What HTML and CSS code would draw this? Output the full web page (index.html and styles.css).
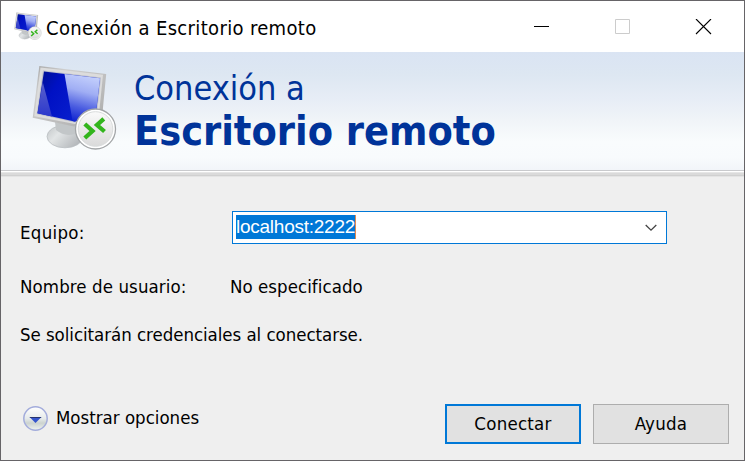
FILE: index.html
```html
<!DOCTYPE html>
<html lang="es">
<head>
<meta charset="utf-8">
<title>Conexión a Escritorio remoto</title>
<link rel="stylesheet" href="styles.css">
</head>
<body>
<svg width="0" height="0" class="defs" aria-hidden="true">
  <defs>
    <linearGradient id="screen" x1="0" y1="0" x2="1" y2="0.500">
      <stop offset="0" stop-color="#00108c"/><stop offset=".35" stop-color="#0011c4"/><stop offset="1" stop-color="#0a22d0"/>
    </linearGradient>
    <linearGradient id="shine" x1=".5" y1="0" x2=".3" y2="1">
      <stop offset="0" stop-color="#c3cffc"/><stop offset=".35" stop-color="#a0aef4"/><stop offset=".7" stop-color="#4a5ce0"/><stop offset="1" stop-color="#1024d0"/>
    </linearGradient>
    <linearGradient id="glow" x1="0" y1="0" x2="0" y2="1">
      <stop offset="0" stop-color="#5a62cc"/><stop offset="1" stop-color="#2c38cc"/>
    </linearGradient>
    <linearGradient id="frame" x1="0" y1="0" x2="1" y2="1">
      <stop offset="0" stop-color="#a4a4a4"/><stop offset=".25" stop-color="#cfcfcf"/><stop offset=".8" stop-color="#b4b4b4"/><stop offset="1" stop-color="#9c9c9c"/>
    </linearGradient>
    <linearGradient id="base" x1="0" y1="0" x2="1" y2=".6">
      <stop offset="0" stop-color="#c0c4c6"/><stop offset=".4" stop-color="#e2e5e6"/><stop offset="1" stop-color="#b4b8bb"/>
    </linearGradient>
    <linearGradient id="disc" x1="0" y1="0" x2="0" y2="1">
      <stop offset="0" stop-color="#fafafa"/><stop offset="1" stop-color="#dadada"/>
    </linearGradient>
    <linearGradient id="orb" x1="0" y1="0" x2="0" y2="1">
      <stop offset="0" stop-color="#ffffff"/><stop offset=".5" stop-color="#e6eaea"/><stop offset=".7" stop-color="#ccd3d0"/><stop offset="1" stop-color="#f0f4f0"/>
    </linearGradient>
    <symbol id="rdp" viewBox="0 0 86 88">
      <ellipse cx="33" cy="71.500" rx="18" ry="11.300" fill="url(#base)" stroke="#b9bec2" stroke-width=".8"/>
      <path d="M23 57L44 61L45 68Q34 73 24 65Z" fill="#c2c6c8"/>
      <path d="M7.300 1L74.200 9L69.700 56L42 61.500L.7 52.700Z" fill="url(#frame)"/>
      <path d="M8.500 2.500L71 9.700L66.500 54L43 59L2.300 51.300Z" fill="#dcdcdc"/>
      <path d="M11 5.500L69 12.500L64.500 52L43 57.500L4.700 49Z" fill="#b9bccc"/>
      <path d="M12 6.500L68 13.300L63.500 52L42.500 56.500L5.500 48.300Z" fill="url(#screen)"/>
      <path d="M32.500 9L68 13.300L63.500 52L42.500 56.500L40.500 56Z" fill="url(#shine)"/>
      <path d="M10.700 17L20 51.500L5.500 48.300Z" fill="url(#glow)"/>
      <circle cx="63.500" cy="64" r="20" fill="#fff" stroke="#a2a5a7" stroke-width="1.300"/>
      <circle cx="63.500" cy="64" r="17.300" fill="url(#disc)" stroke="#d9dcdc"/>
      <path d="M52.800 59L60.500 66L52.800 73M71.800 53.800L65 60L72.500 66.500" fill="none" stroke="#32b51c" stroke-width="4.300"/>
    </symbol>
  </defs>
</svg>
<main class="window">
  <header class="titlebar">
    <svg class="app-icon"><use href="#rdp"/></svg>
    <h1 class="caption">Conexión a Escritorio remoto</h1>
    <svg class="controls" width="180" height="16" fill="none">
      <path d="M0 7.500H15" stroke="#000"/>
      <path d="M81.500 .5H95.500V14.500H81.500Z" stroke="#ccc"/>
      <path d="M162 0L177 15M177 0L162 15" stroke="#000" stroke-width="1.100"/>
    </svg>
  </header>
  <section class="banner">
    <svg class="banner-icon"><use href="#rdp"/></svg>
    <div class="heading">
      <div class="heading-light">Conexión a</div>
      <div class="heading-bold">Escritorio remoto</div>
    </div>
  </section>
  <div class="separator"></div>
  <section class="form">
    <div class="row row-host">
      <span class="label t-equipo">Equipo:</span>
      <div class="combo"><span class="selected">localhost:2222</span>
        <svg class="chevron" width="12" height="8" fill="none"><path d="M.7 1L6 6.200L11.300 1" stroke="#444" stroke-width="1.300"/></svg>
      </div>
    </div>
    <div class="row row-user">
      <span class="label t-user">Nombre de usuario:</span>
      <span class="t-value">No especificado</span>
    </div>
    <p class="note">Se solicitarán credenciales al conectarse.</p>
  </section>
  <footer class="footer">
    <div class="options">
      <svg width="26" height="26"><circle cx="13.500" cy="13.500" r="11.700" fill="url(#orb)" stroke="#a3acdb" stroke-width="1.500"/><path d="M7.500 12H19.500L13.500 18Z" fill="#3555cc"/><path d="M7.500 12H19.500L18.500 13H8.500Z" fill="#26346e"/></svg>
      <span>Mostrar opciones</span>
    </div>
    <button class="button primary">Conectar</button>
    <button class="button">Ayuda</button>
  </footer>
</main>
</body>
</html>
```
FILE: styles.css
```css
* { box-sizing: border-box; }
body {
  margin: 0;
  background: #fff;
  color: #000;
  font: 18.5px/24px "DejaVu Sans Condensed", "DejaVu Sans", sans-serif;
  font-stretch: condensed;
  white-space: nowrap;
  overflow: hidden;
}
.defs { position: absolute; }
.window {
  width: 745px;
  height: 461px;
  border: 1px solid #666467;
  background: #efefef;
  display: flex;
  flex-direction: column;
}
.titlebar {
  height: 51px;
  flex: none;
  background: #fff;
  display: flex;
  align-items: center;
  padding-left: 13px;
}
.app-icon { width: 28px; height: 29px; margin-right: 4px; }
.caption { margin: 3px 0 0; font-size: 20px; font-weight: 400; letter-spacing: .34px; }
.controls { margin: 1px 30px 0 auto; }
.banner {
  height: 118px;
  flex: none;
  display: flex;
  background: linear-gradient(#dae4f3, #dde7f2 22px, #e7edf6 47px, #f0f4f8 68px, #f9fcfd 90px, #f8fbfd 105px, #f2f5f9);
}
.banner-icon { width: 86px; height: 88px; margin: 13px 16px 0 31px; }
.heading { color: #003399; padding-top: 13px; }
.heading-light { font-size: 34px; line-height: 46px; }
.heading-bold { font-size: 41px; line-height: 40px; font-weight: 700; letter-spacing: 0; }
.separator {
  height: 7px;
  flex: none;
  background: linear-gradient(#c9cacd 1px, #fff 1px 2px, #e6e6e6 2px 3px, #dadada 3px 5px, #d0d0d0 5px 6px, #e4e4e4 6px);
}
.form { padding: 34px 0 0 19px; flex: 1; }
.row { display: flex; align-items: center; }
.label { width: 210px; }
.row-host { height: 33px; }
.t-equipo { padding-top: 10px; letter-spacing: .3px; }
.t-user { letter-spacing: .1px; }
.t-value { letter-spacing: .05px; }
.combo {
  width: 435px;
  height: 33px;
  margin-left: 2px;
  border: 1px solid #0078d7;
  background: #fff;
  display: flex;
  justify-content: space-between;
  align-items: center;
  padding: 0 9px 0 3px;
}
.selected {
  background: #0078d7;
  color: #fff;
  border-right: 1px solid #e08a50;
  font: 19px/24px "Liberation Sans", sans-serif;
  letter-spacing: -.25px;
  margin-top: -1px;
}
.row-user { margin-top: 31px; height: 24px; }
.note { margin: 24px 0 0; letter-spacing: -.04px; }
.footer { height: 56px; flex: none; display: flex; padding: 0 15px 0 21px; }
.options { display: flex; margin-right: auto; padding-top: 1px; height: 26px; align-items: center; }
.options span { margin-left: 8px; }
.button {
  width: 136px;
  height: 40px;
  padding: 0;
  border: 1px solid #adadad;
  background: #e1e1e1;
  color: #000;
  font: inherit;
  letter-spacing: .25px;
  border-radius: 0;
}
.primary { border: 2px solid #0078d7; margin-right: 12px; }
```
